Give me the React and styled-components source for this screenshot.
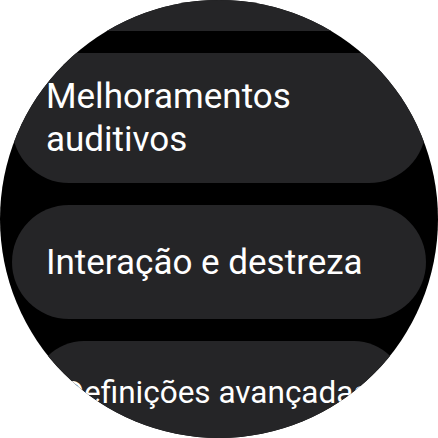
import React from 'react'
import styled, { createGlobalStyle } from 'styled-components'

const items = [
	{ label: 'Melhoramentos de visibilidade', scale: 1 },
	{ label: 'Melhoramentos auditivos', scale: 1 },
	{ label: 'Interação e destreza', scale: 1 },
	{ label: 'Definições avançadas', scale: 0.9 },
]

export default function App() {
	return (
		<>
			<GlobalStyle />
			<Screen>
				<List>
					{items.map((item) => (
						<Chip key={item.label} $scale={item.scale}>
							<Label>{item.label}</Label>
						</Chip>
					))}
				</List>
			</Screen>
		</>
	)
}

const GlobalStyle = createGlobalStyle`
	html, body {
		margin: 0;
		padding: 0;
		background: #ffffff;
	}
	body {
		font-family: Roboto, "Noto Sans", sans-serif;
	}
`
const Screen = styled.div`
	width: 438px;
	height: 438px;
	border-radius: 50%;
	overflow: hidden;
	background-color: #000;
`
const List = styled.div`
	display: flex;
	flex-direction: column;
	gap: 22px;
	padding: 0 12px;
	margin-top: -99px;
`
const Chip = styled.div`
	display: flex;
	align-items: center;
	min-height: 114px;
	box-sizing: border-box;
	padding: 22px 34px;
	border-radius: 57px;
	background-color: #252527;
	transform: scale(${(p) => p.$scale});
	transform-origin: top center;
`
const Label = styled.span`
	color: #ffffff;
	font-size: 35px;
	line-height: 43px;
	font-weight: 400;
`
